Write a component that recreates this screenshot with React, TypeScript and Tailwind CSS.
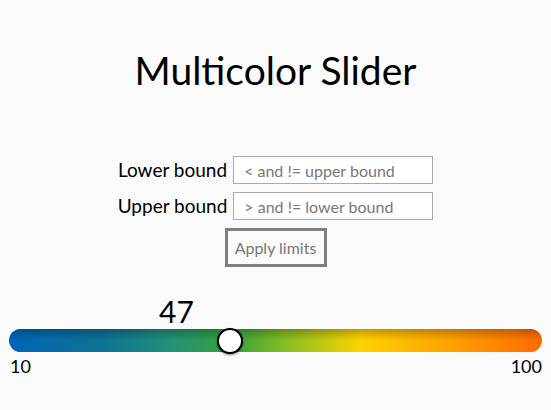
import React from "react";

export default function App() {
  const value = 47;
  const min = 10;
  const max = 100;
  const pct = ((value - min) / (max - min)) * 100;
  return (
    <div
      className="w-[551px] h-[410px] bg-[#fafafa] text-black flex flex-col items-center overflow-hidden"
      style={{ fontFamily: "Lato, 'Noto Sans', sans-serif" }}
    >
      <h1 className="mt-[44px] text-[39px] leading-[52px] font-normal whitespace-nowrap">Multicolor Slider</h1>
      <div className="mt-[60px] flex flex-col items-center gap-[8px]">
        <div className="flex items-center gap-[6px]">
          <label className="text-[19px] leading-[28px] whitespace-nowrap">Lower bound</label>
          <input
            className="w-[200px] h-[28px] bg-white border border-[#a9a9a9] px-[10px] text-[16px] placeholder:text-[#777] outline-none"
            placeholder="< and != upper bound"
          />
        </div>
        <div className="flex items-center gap-[6px]">
          <label className="text-[19px] leading-[28px] whitespace-nowrap">Upper bound</label>
          <input
            className="w-[200px] h-[28px] bg-white border border-[#a9a9a9] px-[10px] text-[16px] placeholder:text-[#777] outline-none"
            placeholder="> and != lower bound"
          />
        </div>
        <button className="w-[102px] h-[39px] border-[3px] border-[#808080] text-[16px] text-[#777] bg-[#fafafa] whitespace-nowrap">
          Apply limits
        </button>
      </div>
      <div className="w-full px-[9px] mt-[28px]">
        <div className="relative h-[34px]">
          <span className="absolute left-[150px] top-0 text-[30px] leading-[32px]">47</span>
        </div>
        <div
          className="relative h-[23px] rounded-full"
          style={{
            background:
              "linear-gradient(to right, #0065b8 0%, #0f7394 18%, #22907a 30%, #36a23c 42%, #86be22 52%, #ffd200 66%, #ffa400 82%, #ff6a00 100%)",
          }}
        >
          <div className="absolute inset-0 rounded-full bg-gradient-to-b from-[rgba(0,0,0,0.25)] via-transparent to-transparent" />
          <div
            className="absolute top-1/2 w-[26px] h-[26px] -translate-x-1/2 -translate-y-1/2 rounded-full bg-white border-2 border-black shadow-[0_1px_2px_rgba(0,0,0,0.5)]"
            style={{ left: `calc(${pct}% + 2px)` }}
          />
        </div>
        <div className="flex justify-between text-[18px] leading-[22px] mt-[3px]">
          <span className="ml-[1px]">10</span>
          <span>100</span>
        </div>
      </div>
    </div>
  );
}
